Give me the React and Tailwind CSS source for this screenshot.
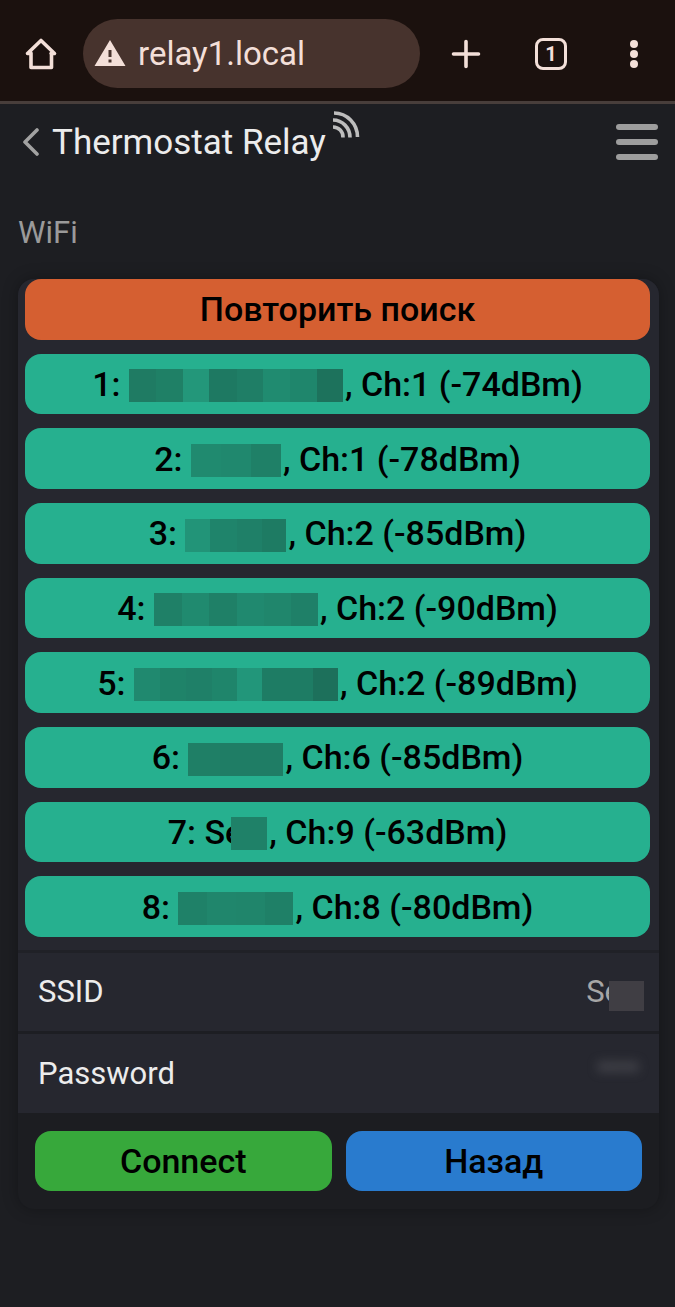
const networks = [
  { id: 1, channel: 1, dbm: -74, visible: "", mask: ["bg-[#1f7b63] w-[27px]", "bg-[#1f8066] w-[27px]", "bg-[#23977a] w-[26px]", "bg-[#1e7962] w-[28px]", "bg-[#1f7e66] w-[26px]", "bg-[#208b70] w-[27px]", "bg-[#1f866c] w-[27px]", "bg-[#1d725c] w-[26px]"] },
  { id: 2, channel: 1, dbm: -78, visible: "", mask: ["bg-[#208a6f] w-[30px]", "bg-[#20886e] w-[30px]", "bg-[#1f8067] w-[30px]"] },
  { id: 3, channel: 2, dbm: -85, visible: "", mask: ["bg-[#229478] w-[25px]", "bg-[#1f846b] w-[27px]", "bg-[#1f8068] w-[25px]", "bg-[#1e7b63] w-[24px]"] },
  { id: 4, channel: 2, dbm: -90, visible: "", mask: ["bg-[#1f8067] w-[28px]", "bg-[#208a6f] w-[27px]", "bg-[#1f8067] w-[28px]", "bg-[#20896f] w-[27px]", "bg-[#20866c] w-[27px]", "bg-[#1f8068] w-[27px]"] },
  { id: 5, channel: 2, dbm: -89, visible: "", mask: ["bg-[#20896f] w-[26px]", "bg-[#1f8369] w-[26px]", "bg-[#1f8068] w-[26px]", "bg-[#1f856b] w-[25px]", "bg-[#22967a] w-[25px]", "bg-[#1e7c64] w-[51px]", "bg-[#1d705b] w-[25px]"] },
  { id: 6, channel: 6, dbm: -85, visible: "", mask: ["bg-[#1f7f66] w-[32px]", "bg-[#1f7d65] w-[32px]", "bg-[#1f7d65] w-[31px]"] },
  { id: 7, channel: 9, dbm: -63, visible: "Se", mask: ["bg-[#1f8168] w-[36px]"] },
  { id: 8, channel: 8, dbm: -80, visible: "", mask: ["bg-[#1f8168] w-[29px]", "bg-[#20866c] w-[29px]", "bg-[#20856b] w-[29px]", "bg-[#1f8067] w-[28px]"] },
];

const buttonBase =
  "flex min-h-[60px] w-full items-center justify-center rounded-2xl text-[34px] leading-10 font-medium text-black";

function BrowserBar() {
  return (
    <header className="flex h-[104px] items-center border-b-3 border-[#483e3b] bg-[#1b110e] pt-1.5 pl-5 text-[#f3dfd8]">
      <button aria-label="Home" className="shrink-0">
        <svg width="42" height="42" viewBox="0 0 42 42" fill="none" stroke="currentColor" strokeWidth="3.6" strokeLinecap="round" strokeLinejoin="round">
          <path d="M11 20.5 H7.5 L21 7.5 L34.5 20.5 H31 M11 20 V34.5 H31.5 V20" />
        </svg>
      </button>
      <div className="ml-[21px] flex h-[69px] min-w-0 flex-1 items-center rounded-full bg-[#47332d] pl-[11px]">
        <svg className="shrink-0" width="32" height="32" viewBox="0 0 32 32" fill="currentColor">
          <path fillRule="evenodd" d="M16 2 L31.5 28 H.5 Z M14.5 12 V19 H17.5 V12 Z M14.5 21.5 V24.5 H17.5 V21.5 Z" />
        </svg>
        <input aria-label="Address" defaultValue="relay1.local" className="ml-3 w-full min-w-0 bg-transparent text-[33px] leading-10 outline-none" />
      </div>
      <div className="flex w-[255px] shrink-0 items-center">
        <button aria-label="New tab" className="ml-[30px]">
          <svg width="32" height="32" viewBox="0 0 32 32" fill="none" stroke="currentColor" strokeWidth="3.6" strokeLinecap="round">
            <path d="M16 3.5 V28.5 M3.5 16 H28.5" />
          </svg>
        </button>
        <button aria-label="Open tabs" className="ml-[53px] flex size-8 items-center justify-center rounded-lg border-3 border-current text-xl leading-none font-bold">1</button>
        <button aria-label="Menu" className="ml-[57px]">
          <svg width="20" height="32" viewBox="0 0 20 32" fill="currentColor">
            <circle cx="10" cy="6" r="4" />
            <circle cx="10" cy="16" r="4" />
            <circle cx="10" cy="26" r="4" />
          </svg>
        </button>
      </div>
    </header>
  );
}

function TitleBar() {
  return (
    <div className="flex h-[76px] items-center pr-[17px] pl-[22px] text-[#ececec]">
      <a href="#back" className="flex items-center gap-3">
        <svg width="18" height="28" viewBox="0 0 18 28" fill="none" stroke="#a2a2a2" strokeWidth="3.6" strokeLinecap="round" strokeLinejoin="round">
          <path d="M15 2 L3 14 L15 26" />
        </svg>
        <h1 className="pt-0.5 text-[35px] leading-10">Thermostat Relay</h1>
      </a>
      <svg className="mb-9 ml-1.5" width="30" height="30" viewBox="0 0 30 30" fill="none" stroke="#bdbdbd" strokeWidth="3.6">
        <path d="M1 18 A10 10 0 0 1 11 28.5 M1 11 A17 17.5 0 0 1 18 28.5 M2 4 A23.5 24 0 0 1 25.5 28" />
      </svg>
      <button aria-label="Open menu" className="ml-auto flex w-[42px] flex-col gap-[9px]">
        <span className="h-1.5 rounded-full bg-[#9d9d9d]" />
        <span className="h-1.5 rounded-full bg-[#9d9d9d]" />
        <span className="h-1.5 rounded-full bg-[#9d9d9d]" />
      </button>
    </div>
  );
}

function NetworkButton({ network }) {
  return (
    <button className={`${buttonBase} bg-[#26b08f]`}>
      <span className="whitespace-pre">{`${network.id}: ${network.visible}`}</span>
      <span className={network.visible ? "mt-1 mr-0.5 -ml-3 flex h-[33px]" : "mt-1 mr-0.5 flex h-[33px]"}>
        {network.mask.map((tone, i) => (
          <span key={i} className={tone} />
        ))}
      </span>
      <span className="whitespace-pre">{`, Ch:${network.channel} (${network.dbm}dBm)`}</span>
    </button>
  );
}

export default function App() {
  return (
    <div className="min-h-screen bg-[#1d1e22] font-[Roboto,sans-serif]">
      <BrowserBar />
      <TitleBar />
      <main className="px-4 pl-[18px]">
        <h2 className="mt-8 pt-px text-[31px] leading-10 text-[#9a9a9a]">WiFi</h2>
        <section className="mt-[26px] overflow-hidden rounded-2xl bg-[#1c1d21] shadow-[0_0_16px_rgba(0,0,0,0.3)]">
          <div className="grid min-h-[671px] auto-rows-fr gap-3.5 bg-[#26272f] pr-[9px] pb-[13px] pl-[7px]">
            <button className={`${buttonBase} bg-[#d55f31]`}>Повторить поиск</button>
            {networks.map((network) => (
              <NetworkButton key={network.id} network={network} />
            ))}
          </div>
          <div className="flex h-[81px] items-center border-t-3 border-[#202127] bg-[#26272f] px-5 pr-[15px]">
            <label htmlFor="ssid" className="text-[31px] leading-10 text-[#ececec]">SSID</label>
            <input id="ssid" defaultValue="Se" className="min-w-0 flex-1 bg-transparent text-right text-[31px] leading-10 text-[#a6a6a6] outline-none" />
            <span className="relative mt-2 -ml-3 h-[30px] w-[35px] bg-[#403e44]" />
          </div>
          <div className="flex h-[82px] items-center border-t-3 border-[#1d1e23] bg-[#26272f] px-5">
            <label htmlFor="password" className="text-[31px] leading-10 text-[#ececec]">Password</label>
            <input id="password" type="password" defaultValue="1234" className="mb-3 min-w-0 flex-1 bg-transparent text-right text-[31px] leading-10 text-[#77777b] blur-[6px] outline-none" />
          </div>
          <div className="grid grid-cols-2 gap-3.5 px-[17px] py-[18px]">
            <button className={`${buttonBase} bg-[#37a83b]`}>Connect</button>
            <button className={`${buttonBase} bg-[#297bce]`}>Назад</button>
          </div>
        </section>
      </main>
    </div>
  );
}
